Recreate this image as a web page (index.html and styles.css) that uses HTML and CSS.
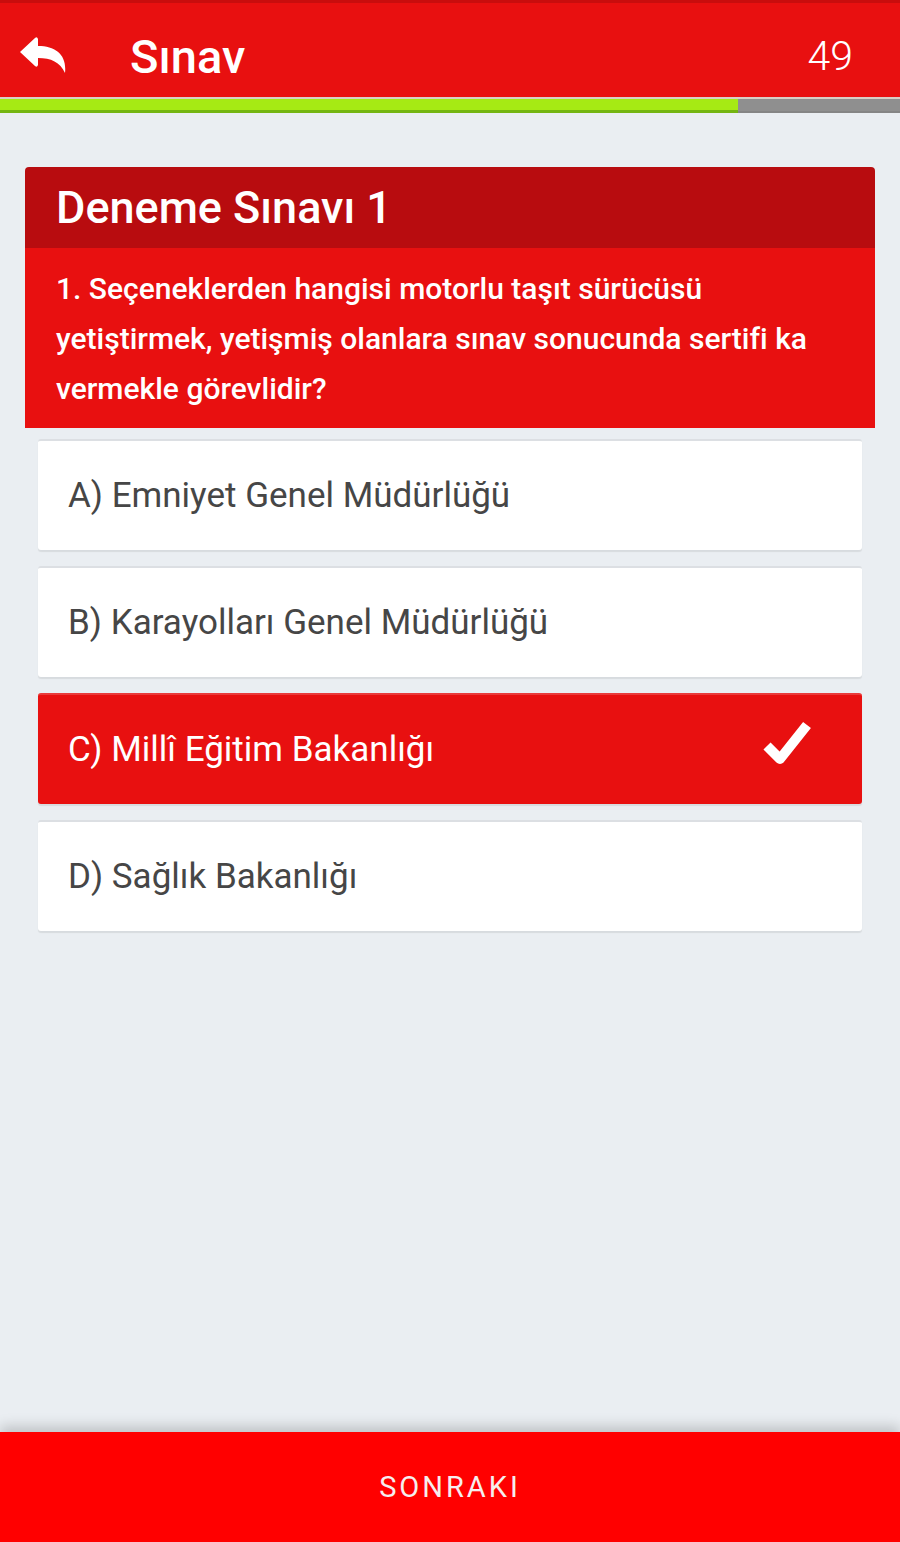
FILE: index.html
```html
<!DOCTYPE html>
<html lang="tr">
<head>
    <meta charset="UTF-8">
    <meta name="viewport" content="width=device-width, initial-scale=1.0">
    <title>Sınav</title>
    <link rel="stylesheet" href="styles.css">
</head>
<body>
    <div class="app">
        <header class="topbar">
            <button class="back" type="button" aria-label="Geri">
                <svg width="46" height="36" viewBox="0 0 46 36">
                    <path d="M0 15 L15 1 Q17 -1 18 2 L18 9 C36 9 47 18 45 36 C40 25 31 21 18 21 L18 28 Q17 31 15 29 Z" fill="#fff"/>
                </svg>
            </button>
            <h1 class="title">Sınav</h1>
            <span class="counter">49</span>
        </header>

        <div class="progress">
            <div class="progress-fill" style="width: 82%"></div>
        </div>

        <main class="content">
            <section class="card">
                <div class="card-head">Deneme Sınavı 1</div>
                <div class="question">
                    1. Seçeneklerden hangisi motorlu taşıt sürücüsü yetiştirmek, yetişmiş olanlara sınav sonucunda sertifi ka vermekle görevlidir?
                </div>
            </section>

            <ul class="options">
                <li class="option">A) Emniyet Genel Müdürlüğü</li>
                <li class="option">B) Karayolları Genel Müdürlüğü</li>
                <li class="option selected">
                    C) Millî Eğitim Bakanlığı
                    <svg class="check" width="50" height="48" viewBox="0 0 50 48">
                        <path d="M5 27 L18 40 L45 6" fill="none" stroke="#fff" stroke-width="10" stroke-linejoin="round"/>
                    </svg>
                </li>
                <li class="option">D) Sağlık Bakanlığı</li>
            </ul>
        </main>

        <button class="next" type="button">SONRAKI</button>
    </div>
</body>
</html>
```

FILE: styles.css
```css
* {
    margin: 0;
    padding: 0;
    box-sizing: border-box;
}

body {
    font-family: Roboto, "Noto Sans", sans-serif;
    background-color: #eaeef2;
    width: 900px;
    height: 1542px;
}

.app {
    height: 100%;
    display: flex;
    flex-direction: column;
}

.topbar {
    height: 97px;
    background-color: #e81010;
    border-top: 3px solid #c90d0d;
    display: flex;
    align-items: center;
    padding: 12px 47px 0 20px;
    color: #fff;
}

.back {
    background: none;
    border: none;
    width: 46px;
    height: 36px;
    display: flex;
    margin-top: -2px;
}

.title {
    font-size: 47px;
    font-weight: 500;
    margin-left: 64px;
    flex: 1;
}

.counter {
    font-size: 41px;
    font-weight: 300;
}

.progress {
    height: 16px;
    border-top: 2px solid #d9cfc6;
    background-color: #8f8f8f;
    border-bottom: 2px solid #858585;
    display: flex;
}

.progress-fill {
    background-color: #a6ea14;
    border-bottom: 3px solid #74b511;
    margin-bottom: -2px;
}

.content {
    flex: 1;
    padding: 54px 25px 0;
}

.card {
    border-radius: 4px 4px 0 0;
    overflow: hidden;
    color: #fff;
}

.card-head {
    height: 81px;
    background-color: #b80c0f;
    display: flex;
    align-items: center;
    padding-left: 31px;
    font-size: 45px;
    font-weight: 500;
}

.question {
    background-color: #e81010;
    padding: 16px 31px 14px;
    font-size: 30px;
    font-weight: 500;
    line-height: 50px;
}

.options {
    list-style: none;
    padding: 11px 13px 0;
}

.option {
    height: 111px;
    margin-bottom: 16px;
    background-color: #fff;
    border-top: 2px solid #dcdfe3;
    border-radius: 3px;
    box-shadow: 0 2px 1px rgba(0, 0, 0, 0.08);
    display: flex;
    align-items: center;
    justify-content: space-between;
    padding: 0 50px 0 30px;
    font-size: 35px;
    color: #464646;
}

.option.selected {
    background-color: #e81010;
    border-top-color: #ea3a3a;
    color: #fff;
}

.check {
    margin-top: -14px;
}

.next {
    height: 110px;
    background-color: #ff0000;
    border: none;
    color: #f6eeee;
    font-family: Roboto, "Noto Sans", sans-serif;
    font-size: 29px;
    letter-spacing: 3px;
    box-shadow: 0 -6px 12px rgba(0, 0, 0, 0.18);
    cursor: pointer;
}
```
